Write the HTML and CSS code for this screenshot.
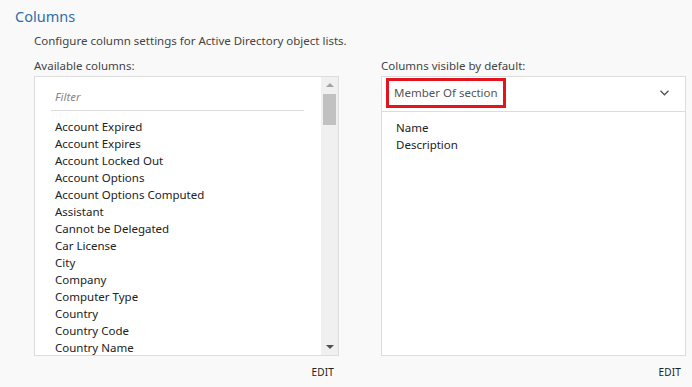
FILE: index.html
```html
<!DOCTYPE html>
<html lang="en">
<head>
    <meta charset="UTF-8">
    <title>Columns</title>
    <link rel="stylesheet" href="styles.css">
</head>
<body>
    <div class="section">
        <h2 class="title">Columns</h2>
        <div class="content">
            <p class="desc">Configure column settings for Active Directory object lists.</p>
            <div class="columns">
                <div class="col">
                    <div class="label">Available columns:</div>
                    <div class="box">
                        <div class="list-area">
                            <div class="filter"><span>Filter</span></div>
                            <ul class="items">
                                <li>Account Expired</li>
                                <li>Account Expires</li>
                                <li>Account Locked Out</li>
                                <li>Account Options</li>
                                <li>Account Options Computed</li>
                                <li>Assistant</li>
                                <li>Cannot be Delegated</li>
                                <li>Car License</li>
                                <li>City</li>
                                <li>Company</li>
                                <li>Computer Type</li>
                                <li>Country</li>
                                <li>Country Code</li>
                                <li>Country Name</li>
                            </ul>
                        </div>
                        <div class="scrollbar">
                            <span class="arrow up"></span>
                            <div class="track"><div class="thumb"></div></div>
                            <span class="arrow down"></span>
                        </div>
                    </div>
                    <div class="actions"><button class="edit">EDIT</button></div>
                </div>
                <div class="col">
                    <div class="label">Columns visible by default:</div>
                    <div class="box box-right">
                        <div class="select-row">
                            <span class="select-text">Member Of section</span>
                            <svg class="chevron" width="9" height="6" viewBox="0 0 9 6">
                                <path d="M0.5 0.8 L4.5 4.8 L8.5 0.8" fill="none" stroke="#555" stroke-width="1.3"/>
                            </svg>
                        </div>
                        <ul class="items visible">
                            <li>Name</li>
                            <li>Description</li>
                        </ul>
                    </div>
                    <div class="actions"><button class="edit">EDIT</button></div>
                </div>
            </div>
        </div>
    </div>
</body>
</html>
```

FILE: styles.css
```css
* {
    box-sizing: border-box;
    margin: 0;
    padding: 0;
}
body {
    background: #f9f9f9;
    color: #333;
    font-family: 'Noto Sans', 'Open Sans', sans-serif;
    font-size: 11.5px;
    overflow: hidden;
}
.section {
    padding: 5px 6px 0 15px;
}
.title {
    font-size: 14.5px;
    font-weight: 400;
    color: #2f6eab;
    line-height: 22px;
}
.content {
    padding-left: 19px;
}
.desc {
    color: #444;
    line-height: 17px;
    margin-top: 5px;
}
.columns {
    display: grid;
    grid-template-columns: 305px 305px;
    gap: 42px;
    margin-top: 8px;
}
.label {
    color: #444;
    line-height: 17px;
    margin-bottom: 2px;
}
.box {
    height: 280px;
    background: #fff;
    border: 1px solid #ddd;
    display: flex;
    overflow: hidden;
}
.list-area {
    flex: 1;
    padding: 0 16px 0 16px;
    overflow: hidden;
}
.filter {
    height: 34px;
    border-bottom: 1px solid #ddd;
    display: flex;
    align-items: center;
    padding-left: 4px;
    padding-top: 5px;
}
.filter span {
    font-style: italic;
    color: #888;
}
.items {
    list-style: none;
    padding: 7px 0 0 4px;
}
.items li {
    line-height: 17px;
    color: #222;
    white-space: nowrap;
}
.scrollbar {
    width: 18px;
    background: #f0f0f0;
    display: flex;
    flex-direction: column;
    align-items: center;
    border-left: 1px solid #fff;
}
.arrow {
    width: 0;
    height: 0;
    border-left: 4px solid transparent;
    border-right: 4px solid transparent;
    margin: 6px 0;
}
.arrow.up {
    border-bottom: 4px solid #a3a3a3;
}
.arrow.down {
    border-top: 4px solid #505050;
}
.track {
    flex: 1;
    width: 100%;
    padding: 1px 2px 0;
}
.thumb {
    height: 31px;
    background: #c1c1c1;
}
.box-right {
    flex-direction: column;
}
.select-row {
    height: 35px;
    border-bottom: 1px solid #ddd;
    display: flex;
    align-items: center;
    justify-content: space-between;
    padding: 0 16px 2px 4px;
}
.select-text {
    border: 3px solid #e4141f;
    color: #555;
    font-size: 11.5px;
    padding: 3px 5px;
    line-height: 18px;
}
.items.visible {
    padding: 7px 0 0 14px;
}
.actions {
    display: flex;
    justify-content: flex-end;
    padding: 9px 5px 0 0;
}
.edit {
    background: none;
    border: none;
    font-family: 'Noto Sans', sans-serif;
    font-size: 10px;
    color: #222;
    letter-spacing: 0.2px;
}
```
